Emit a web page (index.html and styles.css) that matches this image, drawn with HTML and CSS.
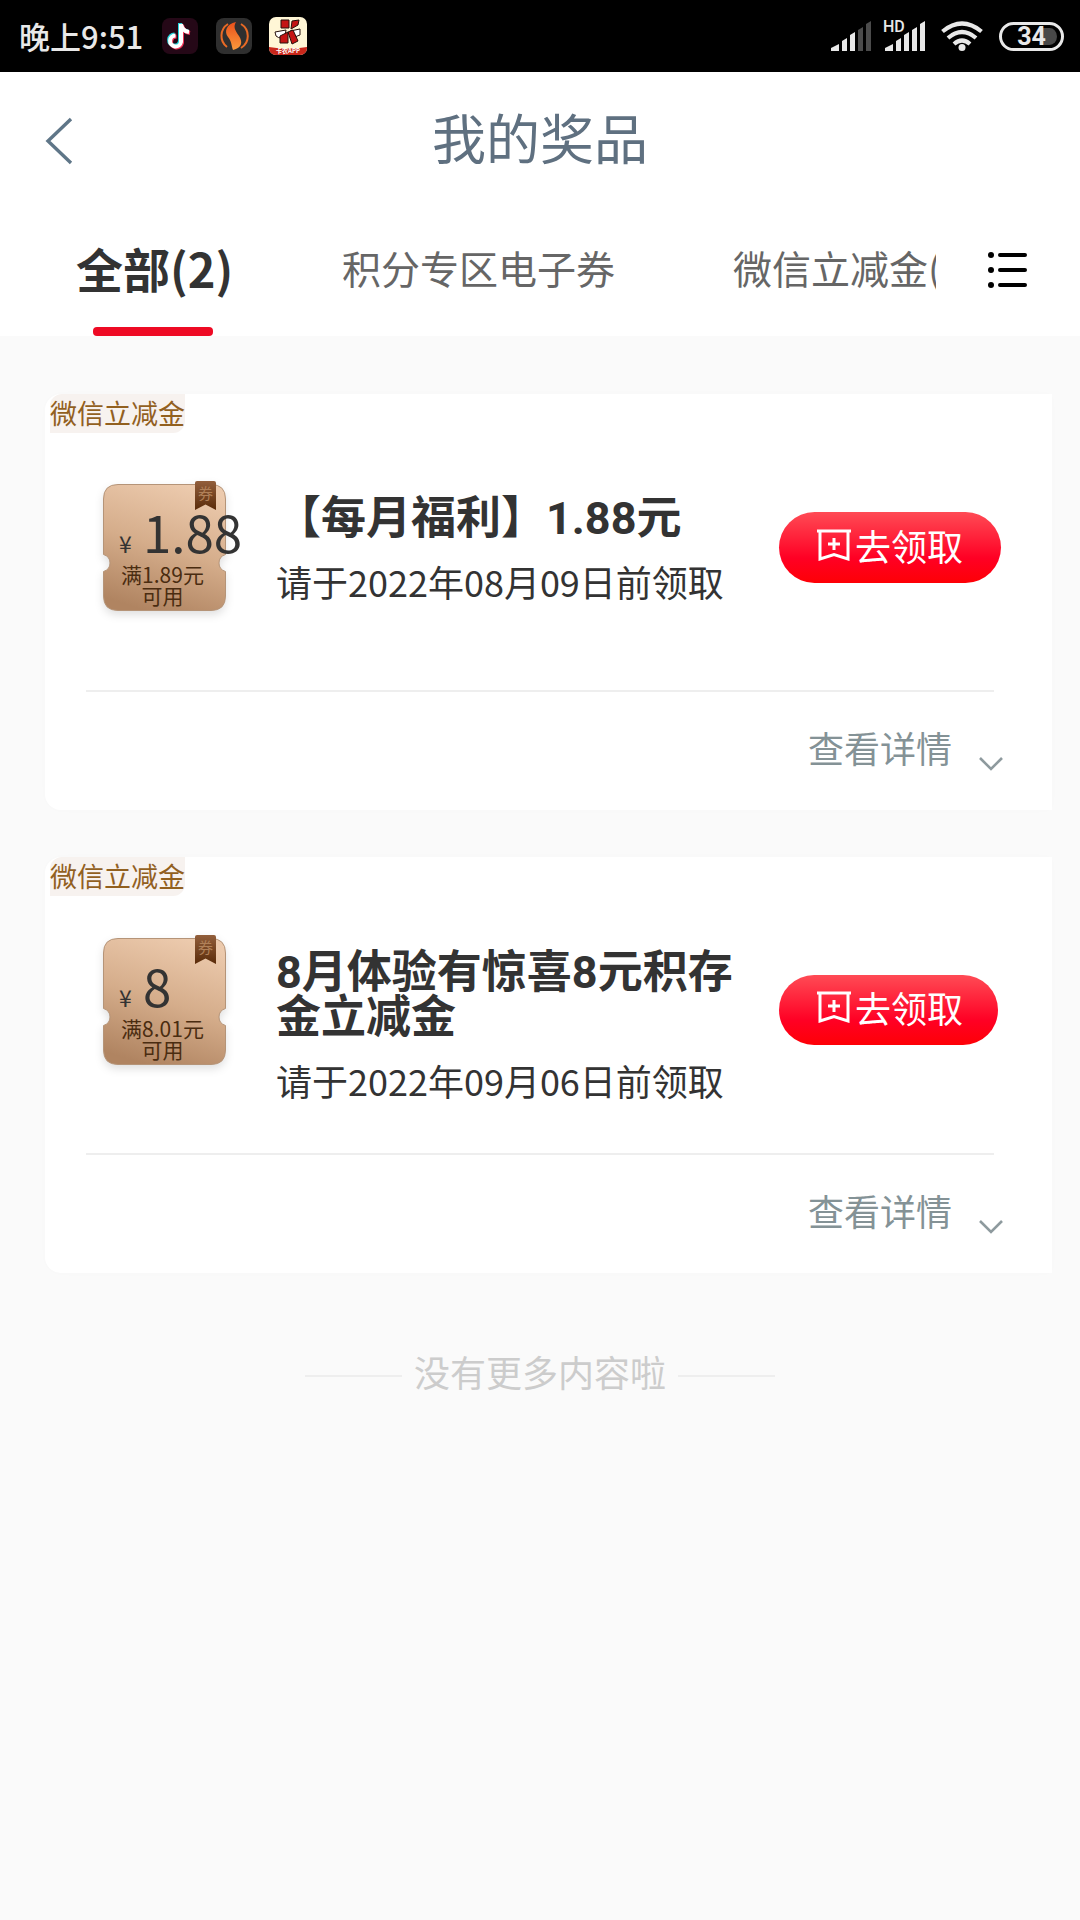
FILE: index.html
```html
<!DOCTYPE html>
<html lang="zh-CN">
<head>
<meta charset="utf-8">
<meta name="viewport" content="width=device-width, initial-scale=1">
<title>我的奖品</title>
<link rel="stylesheet" href="styles.css">
</head>
<body>
<svg class="defs" width="0" height="0" aria-hidden="true">
  <defs>
    <linearGradient id="copper" x1="0.65" y1="0" x2="0.35" y2="1">
      <stop offset="0" stop-color="#eccaad"/>
      <stop offset="0.5" stop-color="#d5ad8b"/>
      <stop offset="1" stop-color="#b08461"/>
    </linearGradient>
    <linearGradient id="ribbon" x1="0" y1="0" x2="0" y2="1">
      <stop offset="0" stop-color="#925f3c"/>
      <stop offset="1" stop-color="#5a2b09"/>
    </linearGradient>
    <linearGradient id="flame" x1="0" y1="0" x2="0" y2="1">
      <stop offset="0" stop-color="#e9501b"/>
      <stop offset="1" stop-color="#fb9a3c"/>
    </linearGradient>
    <symbol id="ticket" viewBox="0 0 123 132">
      <path d="M15 3.500H108Q122.500 3.500 122.500 18V73.500Q116 75.500 116 82T122.500 90.500V115Q122.500 129.500 108 129.500H15Q.500 129.500 .500 115V90.500Q7 88.500 7 82T.500 73.500V18Q.500 3.500 15 3.500Z" fill="url(#copper)" stroke="#b59478"/>
      <path d="M92 2Q92 0 94 0H111Q113 0 113 2V29L102.500 23.500 92 29Z" fill="url(#ribbon)"/>
    </symbol>
    <symbol id="claim" viewBox="0 0 36 32">
      <path d="M1 2H35M4 2V30L18 25.500 32 30V2M18 9V21M12 15H24" fill="none" stroke="#fff" stroke-width="3"/>
    </symbol>
    <symbol id="chevron" viewBox="0 0 26 16">
      <path d="M2 2 13 13 24 2" fill="none" stroke="#8e9a9e" stroke-width="2.600"/>
    </symbol>
  </defs>
</svg>

<div class="status">
  <div class="status-side">
    <time class="clock">晚上9:51</time>
    <div class="apps">
      <svg class="app" viewBox="0 0 38 38" aria-hidden="true">
        <rect x="1" y="1" width="36" height="36" rx="8" fill="#250817"/>
        <g fill="none" stroke-width="4">
          <path d="M19 6V24A5.500 5.500 0 1 1 13.500 17.500M19 7Q20 13 27 14.500" stroke="#25d5dc"/>
          <path d="M21 8V26A5.500 5.500 0 1 1 15.500 19.500M21 8Q22 15 29 16" stroke="#ee3356"/>
          <path d="M20 7V25A5.500 5.500 0 1 1 14.500 18.500M20 7Q21 14 28 15" stroke="#fff"/>
        </g>
      </svg>
      <svg class="app" viewBox="0 0 38 38" aria-hidden="true">
        <rect x="1" y="1" width="36" height="36" rx="8" fill="#2f2f2f"/>
        <path d="M13 7A14 14 0 0 0 12 30M26 7A14 14 0 0 1 26 31" fill="none" stroke="#e96a25" stroke-width="2"/>
        <path d="M21 5C11 7 9 15 13 20S16 28 18 33C27 31 28 25 24 19S18 10 21 5Z" fill="url(#flame)"/>
      </svg>
      <svg class="app" viewBox="0 0 38 38" aria-hidden="true">
        <rect width="38" height="38" rx="7" fill="#fff6d6"/>
        <path d="M0 30Q19 33 38 30V31A7 7 0 0 1 31 38H7A7 7 0 0 1 0 31Z" fill="#c9271b"/>
        <path d="M6 15 17 13 16 19Q12 23 7 19ZM21 14 31 12V18Q27 21 23 18Z" fill="#fff" stroke="#26100c"/>
        <path d="M12 3H20V11H12ZM23 4 30 3 29 8 22 12ZM11 19 19 15V26H11ZM19 15 24 13 29 24 23 27Z" fill="#c41414" stroke="#26100c"/>
        <text class="app-name" x="19" y="36" text-anchor="middle">卡农APP</text>
      </svg>
    </div>
  </div>
  <div class="status-side signals">
    <svg class="bars" viewBox="0 0 42 32" aria-hidden="true">
      <g fill="#e8e8e8"><path d="M0 28 8 24V31H0ZM11 21 16 18V31H11ZM19 15 24 12V31H19Z"/></g>
      <g fill="#4b4b4b"><path d="M27 10 32 7V31H27ZM35 4 40 1V31H35Z"/></g>
    </svg>
    <svg class="bars-hd" viewBox="0 0 44 32" aria-hidden="true">
      <text class="hd" x="-2" y="12">HD</text>
      <path d="M0 28 8 24V31H0ZM11 21 16 18V31H11ZM19 15 24 12V31H19ZM27 10 32 7V31H27ZM35 4 40 1V31H35Z" fill="#e8e8e8"/>
    </svg>
    <svg class="wifi" viewBox="0 0 42 32" aria-hidden="true">
      <g fill="none" stroke="#e8e8e8" stroke-width="4.200"><path d="M1.500 11.500Q21-4.500 40.500 11.500M7 18Q21 6 35 18M13 24Q21 17 29 24"/></g>
      <circle cx="21" cy="27.500" r="3.500" fill="#e8e8e8"/>
    </svg>
    <div class="battery">34</div>
  </div>
</div>

<header class="top">
  <div class="titlebar">
    <button class="back" type="button" aria-label="返回">
      <svg viewBox="0 0 28 50" aria-hidden="true"><path d="M26 3 3 25 26 47" fill="none" stroke="#5f7688" stroke-width="3.400"/></svg>
    </button>
    <h1>我的奖品</h1>
  </div>
  <div class="tabbar">
    <nav class="tabs">
      <a class="tab active" href="#all">全部(2)</a>
      <a class="tab" href="#points">积分专区电子券</a>
      <a class="tab" href="#wechat">微信立减金(2)</a>
    </nav>
    <button class="menu" type="button" aria-label="分类">
      <svg viewBox="0 0 40 38" aria-hidden="true">
        <g fill="#000"><circle cx="3" cy="4" r="3"/><circle cx="3" cy="19" r="3"/><circle cx="3" cy="34" r="3"/></g>
        <path d="M12 4H37M12 19H37M12 34H37" stroke="#000" stroke-width="4" stroke-linecap="round"/>
      </svg>
    </button>
  </div>
</header>

<main class="list" id="all">
  <article class="card">
    <span class="tag">微信立减金</span>
    <div class="body">
      <div class="coupon">
        <svg class="coupon-bg" aria-hidden="true"><use href="#ticket"/></svg>
        <span class="mark">券</span>
        <p class="amount"><span class="yen">¥</span>1.88</p>
        <p class="rule">满1.89元<br>可用</p>
      </div>
      <div class="info">
        <h2>【每月福利】1.88元</h2>
        <p class="due">请于2022年08月09日前领取</p>
      </div>
      <button class="claim" type="button"><svg aria-hidden="true"><use href="#claim"/></svg>去领取</button>
    </div>
    <div class="foot">
      <a class="more" href="#detail-1">查看详情<svg aria-hidden="true"><use href="#chevron"/></svg></a>
    </div>
  </article>

  <article class="card two-line">
    <span class="tag">微信立减金</span>
    <div class="body">
      <div class="coupon">
        <svg class="coupon-bg" aria-hidden="true"><use href="#ticket"/></svg>
        <span class="mark">券</span>
        <p class="amount"><span class="yen">¥</span>8</p>
        <p class="rule">满8.01元<br>可用</p>
      </div>
      <div class="info">
        <h2>8月体验有惊喜8元积存金立减金</h2>
        <p class="due">请于2022年09月06日前领取</p>
      </div>
      <button class="claim" type="button"><svg aria-hidden="true"><use href="#claim"/></svg>去领取</button>
    </div>
    <div class="foot">
      <a class="more" href="#detail-2">查看详情<svg aria-hidden="true"><use href="#chevron"/></svg></a>
    </div>
  </article>

  <p class="end">没有更多内容啦</p>
</main>
</body>
</html>
```
FILE: styles.css
```css
* { box-sizing: border-box; }
body {
  margin: 0;
  background: #fafafa;
  color: #333;
  font-family: "Noto Sans CJK SC", sans-serif;
}
h1, h2, p { margin: 0; font-weight: 400; }
a { color: inherit; text-decoration: none; }
button { border: 0; padding: 0; background: none; font: inherit; color: inherit; }
svg { display: block; flex: none; }
.defs { position: absolute; }

/* status bar */
.status {
  display: flex;
  justify-content: space-between;
  align-items: center;
  height: 72px;
  padding: 0 16px 0 19px;
  background: #000;
  color: #e8e8e8;
}
.status-side { display: flex; align-items: center; }
.clock { font-size: 31px; font-weight: 500; line-height: 70px; }
.apps { display: flex; gap: 16px; margin-left: 18px; }
.app { width: 38px; height: 38px; }
.app-name { fill: #fff; font-size: 6px; font-weight: 700; }
.signals { gap: 12px; }
.bars { width: 42px; height: 32px; }
.bars-hd { width: 44px; height: 32px; overflow: visible; }
.hd { fill: #e8e8e8; font: 500 16px Roboto, sans-serif; }
.wifi { width: 42px; height: 32px; }
.battery {
  width: 65px;
  height: 29px;
  margin-left: 4px;
  border: 3px solid #e8e8e8;
  border-radius: 15px;
  padding: 3px 4px;
  background: linear-gradient(90deg, #000 70%, #484848 70%) content-box;
  font: 700 25px/18px Roboto, sans-serif;
  text-align: center;
}

/* header */
.top { background: #fff; }
.titlebar {
  display: grid;
  grid-template-columns: 80px 1fr 80px;
  align-items: center;
  height: 136px;
}
.back { padding: 2px 0 0 45px; }
.back svg { width: 28px; height: 50px; }
h1 { padding-bottom: 6px; color: #5f7080; font-size: 54px; line-height: 130px; text-align: center; }
.tabbar { display: flex; align-items: center; justify-content: space-between; height: 128px; padding-right: 52px; }
.tabs { display: flex; gap: 118px; width: 936px; height: 128px; padding-left: 76px; overflow: hidden; }
.tab { flex: none; color: #666; font-size: 39px; line-height: 118px; white-space: nowrap; }
.active { position: relative; width: 148px; color: #333; font-size: 47px; font-weight: 700; line-height: 120px; }
.active::after {
  content: "";
  position: absolute;
  left: 17px;
  bottom: 0;
  width: 120px;
  height: 9px;
  border-radius: 4px;
  background: #ee0a24;
}
.menu { padding-bottom: 4px; }
.menu svg { width: 40px; height: 38px; }

/* prize cards */
.list { display: flex; flex-direction: column; gap: 47px; padding: 58px 28px 40px 45px; }
.card {
  padding: 0 58px 0 41px;
  border-radius: 16px 0 0 16px;
  background: #fff;
  box-shadow: 0 0 12px rgba(0, 0, 0, 0.01);
}
.tag {
  display: block;
  width: 135px;
  height: 39px;
  margin-left: -36px;
  border-radius: 12px 0 12px 0;
  background: #f7f2ef;
  color: #92601f;
  font-size: 27px;
  line-height: 38px;
  white-space: nowrap;
}
.body {
  display: flex;
  align-items: flex-start;
  min-height: 259px;
  padding: 48px 0 20px 17px;
  border-bottom: 2px solid #eee;
}
.two-line .body { padding-top: 39px; }
.coupon { position: relative; flex: none; width: 123px; height: 132px; }
.coupon-bg {
  position: absolute;
  inset: 0;
  width: 123px;
  height: 132px;
  overflow: visible;
  filter: drop-shadow(0 4px 4px rgba(0, 0, 0, 0.12));
}
.mark {
  position: absolute;
  top: 4px;
  right: 13px;
  color: #b08058;
  font-size: 15px;
  line-height: 16px;
}
.amount {
  position: relative;
  height: 83px;
  padding: 25px 0 0 16px;
  font-size: 51px;
  line-height: 50px;
  white-space: nowrap;
}
.yen { display: inline-block; width: 24px; font-size: 23px; }
.rule { position: relative; padding-right: 4px; color: #4a2c10; font-size: 21px; line-height: 21px; text-align: center; }
.info { flex: 1; padding: 15px 0 0 50px; }
.two-line .info { padding-right: 40px; }
h2 { font-family: Roboto, "Noto Sans CJK SC", sans-serif; font-size: 45px; font-weight: 700; line-height: 45px; }
.due { margin-top: 13px; font-size: 36px; line-height: 54px; white-space: nowrap; }
.claim {
  display: flex;
  flex: none;
  align-items: center;
  gap: 3px;
  width: 222px;
  height: 71px;
  margin: 31px -7px 0 0;
  padding: 0 0 6px 37px;
  border-radius: 36px;
  background: linear-gradient(#ff4b55, #ff0024 65%, #fe0006);
  color: #fff;
  font-size: 36px;
  line-height: 54px;
}
.two-line .claim { width: 219px; height: 70px; margin: 40px -4px 0 0; }
.claim svg { width: 36px; height: 32px; }
.foot { display: flex; justify-content: flex-end; height: 118px; padding-top: 28px; }
.more { display: flex; margin-right: -10px; gap: 26px; color: #849296; font-size: 36px; line-height: 54px; }
.more svg { width: 26px; height: 16px; margin-top: 36px; }

.end {
  display: flex;
  justify-content: center;
  gap: 12px;
  margin: 24px 17px 0 0;
  color: #ccc;
  font-size: 36px;
  line-height: 54px;
}
.end::before, .end::after { content: ""; width: 97px; height: 2px; margin-top: 31px; background: #eee; }
```
